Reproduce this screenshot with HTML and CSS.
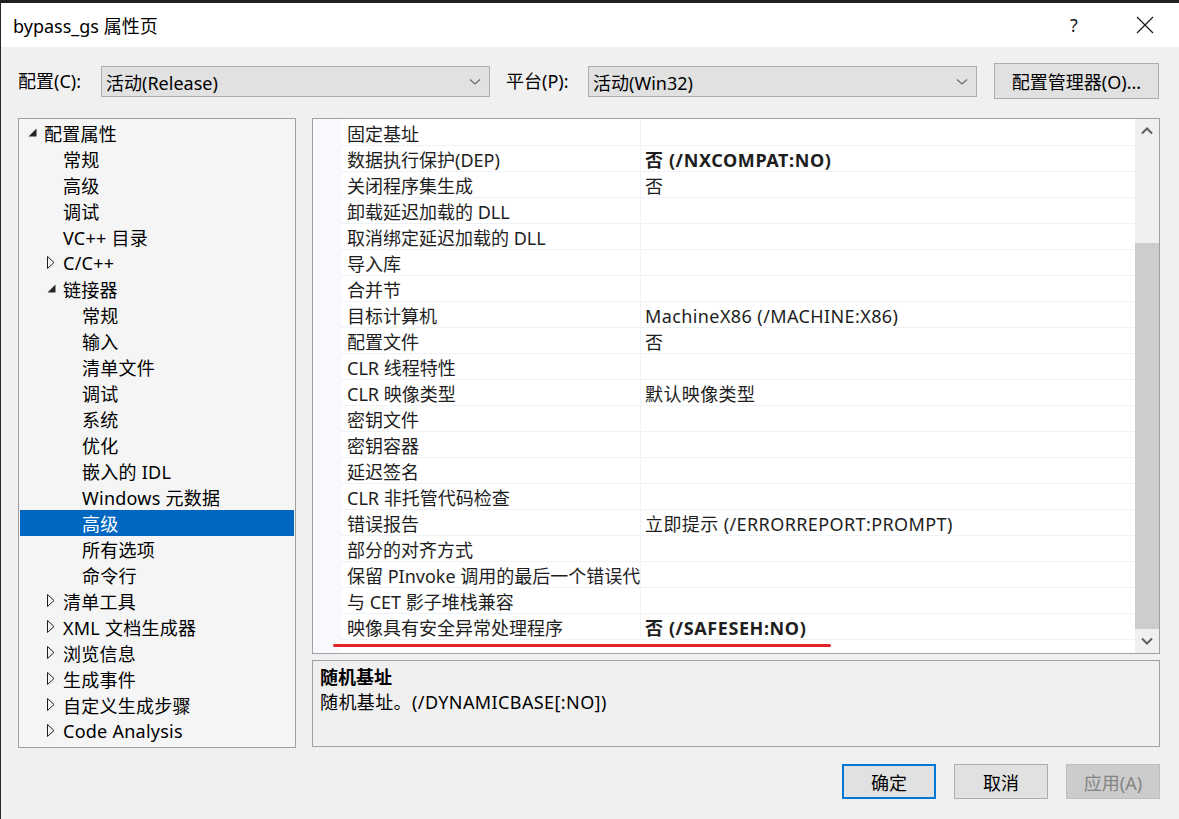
FILE: index.html
```html
<!DOCTYPE html>
<html lang="zh-CN">
<head>
<meta charset="utf-8">
<title>bypass_gs 属性页</title>
<link rel="stylesheet" href="styles.css">
</head>
<body>
<div class="window">
  <div class="titlebar">
    <div class="title">bypass_gs 属性页</div>
    <div class="tb-help">?</div>
    <div class="tb-close">
      <svg width="18" height="18" viewBox="0 0 18 18"><path d="M1 1 L17 17 M17 1 L1 17" stroke="#1a1a1a" stroke-width="1.2" fill="none"/></svg>
    </div>
  </div>
  <div class="body">
    <div class="toolbar">
      <div class="label lbl-config">配置(C):</div>
      <div class="combo"><span>活动(Release)</span><svg class="chev" width="12" height="8" viewBox="0 0 12 8"><path d="M1 1.5 L6 6 L11 1.5" stroke="#6a6a6a" stroke-width="1.2" fill="none"/></svg></div>
      <div class="label lbl-platform">平台(P):</div>
      <div class="combo"><span>活动(Win32)</span><svg class="chev" width="12" height="8" viewBox="0 0 12 8"><path d="M1 1.5 L6 6 L11 1.5" stroke="#6a6a6a" stroke-width="1.2" fill="none"/></svg></div>
      <div class="btn btn-manager">配置管理器(O)...</div>
    </div>
    <div class="main">
      <div class="tree">
        <div class="node l0"><span class="exp"><svg width="9" height="9" viewBox="0 0 9 9"><path d="M8.5 0.5 L8.5 8.5 L0.5 8.5 Z" fill="#262626"/></svg></span><span>配置属性</span></div>
        <div class="node l1"><span class="exp"></span><span>常规</span></div>
        <div class="node l1"><span class="exp"></span><span>高级</span></div>
        <div class="node l1"><span class="exp"></span><span>调试</span></div>
        <div class="node l1"><span class="exp"></span><span>VC++ 目录</span></div>
        <div class="node l1"><span class="exp"><svg width="8" height="13" viewBox="0 0 8 13"><path d="M0.5 0.5 L7 6.5 L0.5 12.5 Z" fill="none" stroke="#1e1e1e" stroke-width="1"/></svg></span><span>C/C++</span></div>
        <div class="node l1"><span class="exp"><svg width="9" height="9" viewBox="0 0 9 9"><path d="M8.5 0.5 L8.5 8.5 L0.5 8.5 Z" fill="#262626"/></svg></span><span>链接器</span></div>
        <div class="node l2"><span class="exp"></span><span>常规</span></div>
        <div class="node l2"><span class="exp"></span><span>输入</span></div>
        <div class="node l2"><span class="exp"></span><span>清单文件</span></div>
        <div class="node l2"><span class="exp"></span><span>调试</span></div>
        <div class="node l2"><span class="exp"></span><span>系统</span></div>
        <div class="node l2"><span class="exp"></span><span>优化</span></div>
        <div class="node l2"><span class="exp"></span><span>嵌入的 IDL</span></div>
        <div class="node l2"><span class="exp"></span><span>Windows 元数据</span></div>
        <div class="node l2 selected"><span class="exp"></span><span>高级</span></div>
        <div class="node l2"><span class="exp"></span><span>所有选项</span></div>
        <div class="node l2"><span class="exp"></span><span>命令行</span></div>
        <div class="node l1"><span class="exp"><svg width="8" height="13" viewBox="0 0 8 13"><path d="M0.5 0.5 L7 6.5 L0.5 12.5 Z" fill="none" stroke="#1e1e1e" stroke-width="1"/></svg></span><span>清单工具</span></div>
        <div class="node l1"><span class="exp"><svg width="8" height="13" viewBox="0 0 8 13"><path d="M0.5 0.5 L7 6.5 L0.5 12.5 Z" fill="none" stroke="#1e1e1e" stroke-width="1"/></svg></span><span>XML 文档生成器</span></div>
        <div class="node l1"><span class="exp"><svg width="8" height="13" viewBox="0 0 8 13"><path d="M0.5 0.5 L7 6.5 L0.5 12.5 Z" fill="none" stroke="#1e1e1e" stroke-width="1"/></svg></span><span>浏览信息</span></div>
        <div class="node l1"><span class="exp"><svg width="8" height="13" viewBox="0 0 8 13"><path d="M0.5 0.5 L7 6.5 L0.5 12.5 Z" fill="none" stroke="#1e1e1e" stroke-width="1"/></svg></span><span>生成事件</span></div>
        <div class="node l1"><span class="exp"><svg width="8" height="13" viewBox="0 0 8 13"><path d="M0.5 0.5 L7 6.5 L0.5 12.5 Z" fill="none" stroke="#1e1e1e" stroke-width="1"/></svg></span><span>自定义生成步骤</span></div>
        <div class="node l1"><span class="exp"><svg width="8" height="13" viewBox="0 0 8 13"><path d="M0.5 0.5 L7 6.5 L0.5 12.5 Z" fill="none" stroke="#1e1e1e" stroke-width="1"/></svg></span><span>Code Analysis</span></div>
      </div>
      <div class="right">
        <div class="grid">
          <div class="gutter"></div>
          <div class="rows">
            <div class="row"><div class="name">固定基址</div><div class="value"></div></div>
            <div class="row"><div class="name">数据执行保护(DEP)</div><div class="value bold">否 (/NXCOMPAT:NO)</div></div>
            <div class="row"><div class="name">关闭程序集生成</div><div class="value">否</div></div>
            <div class="row"><div class="name">卸载延迟加载的 DLL</div><div class="value"></div></div>
            <div class="row"><div class="name">取消绑定延迟加载的 DLL</div><div class="value"></div></div>
            <div class="row"><div class="name">导入库</div><div class="value"></div></div>
            <div class="row"><div class="name">合并节</div><div class="value"></div></div>
            <div class="row"><div class="name">目标计算机</div><div class="value">MachineX86 (/MACHINE:X86)</div></div>
            <div class="row"><div class="name">配置文件</div><div class="value">否</div></div>
            <div class="row"><div class="name">CLR 线程特性</div><div class="value"></div></div>
            <div class="row"><div class="name">CLR 映像类型</div><div class="value">默认映像类型</div></div>
            <div class="row"><div class="name">密钥文件</div><div class="value"></div></div>
            <div class="row"><div class="name">密钥容器</div><div class="value"></div></div>
            <div class="row"><div class="name">延迟签名</div><div class="value"></div></div>
            <div class="row"><div class="name">CLR 非托管代码检查</div><div class="value"></div></div>
            <div class="row"><div class="name">错误报告</div><div class="value">立即提示 (/ERRORREPORT:PROMPT)</div></div>
            <div class="row"><div class="name">部分的对齐方式</div><div class="value"></div></div>
            <div class="row"><div class="name">保留 PInvoke 调用的最后一个错误代码</div><div class="value"></div></div>
            <div class="row"><div class="name">与 CET 影子堆栈兼容</div><div class="value"></div></div>
            <div class="row"><div class="name">映像具有安全异常处理程序</div><div class="value bold">否 (/SAFESEH:NO)</div></div>
          </div>
          <div class="scrollbar">
            <div class="sb-btn"><svg width="12" height="8" viewBox="0 0 12 8"><path d="M1 6.5 L6 1.5 L11 6.5" stroke="#606060" stroke-width="2" fill="none"/></svg></div>
            <div class="sb-track"><div class="sb-thumb"></div></div>
            <div class="sb-btn"><svg width="12" height="8" viewBox="0 0 12 8"><path d="M1 1.5 L6 6.5 L11 1.5" stroke="#606060" stroke-width="2" fill="none"/></svg></div>
          </div>
          <div class="redline"></div>
        </div>
        <div class="desc">
          <div class="desc-title">随机基址</div>
          <div class="desc-text">随机基址。(/DYNAMICBASE[:NO])</div>
        </div>
      </div>
    </div>
    <div class="footer">
      <div class="btn btn-ok">确定</div>
      <div class="btn btn-cancel">取消</div>
      <div class="btn btn-apply">应用(A)</div>
    </div>
  </div>
</div>
</body>
</html>
```

FILE: styles.css
```css
* { box-sizing: border-box; }
html, body { margin: 0; padding: 0; }
body {
  width: 1179px;
  height: 819px;
  overflow: hidden;
  background: #f0f0f0;
  font-family: "Noto Sans", "Noto Sans CJK SC", sans-serif;
  font-size: 18px;
  color: #000;
}
.window {
  width: 1179px;
  height: 819px;
  border-top: 3px solid #1f1f1f;
  border-left: 1px solid #2a2a2a;
  background: #f0f0f0;
  display: flex;
  flex-direction: column;
}
.titlebar {
  height: 44px;
  background: #fff;
  display: flex;
  align-items: center;
  padding-left: 12px;
}
.title { flex: 1; font-size: 18px; color: #000; }
.tb-help {
  width: 30px;
  text-align: center;
  font-size: 18px;
  color: #1a1a1a;
  margin-right: 41px;
}
.tb-close {
  width: 30px;
  display: flex;
  justify-content: center;
  margin-right: 19px;
}
.body {
  flex: 1;
  padding: 16px 19px 0 17px;
  display: flex;
  flex-direction: column;
}
.toolbar {
  display: flex;
  align-items: center;
  height: 36px;
}
.label { line-height: 31px; padding-top: 1px; }
.lbl-config { width: 83px; }
.lbl-platform { width: 82px; margin-left: 16px; }
.combo {
  width: 389px;
  height: 31px;
  background: #e1e1e1;
  border: 1px solid #adadad;
  display: flex;
  align-items: center;
  padding-left: 4px;
  padding-right: 8px;
}
.combo span { flex: 1; padding-top: 1px; }
.chev { margin-top: 1px; }
.btn {
  background: #e1e1e1;
  border: 1px solid #adadad;
  display: flex;
  align-items: center;
  justify-content: center;
}
.btn-manager {
  width: 165px;
  height: 36px;
  margin-left: 17px;
}
.main {
  margin-top: 19px;
  height: 630px;
  display: flex;
}
.tree {
  width: 278px;
  height: 630px;
  background: #f5f5f5;
  border: 1px solid #a0a0a0;
  padding-top: 1px;
}
.node {
  height: 26px;
  display: flex;
  align-items: center;
  white-space: nowrap;
  margin: 0 1px 0 0;
  letter-spacing: 0.25px;
}
.node.l0 { padding-left: 5px; }
.node.l1 { padding-left: 24px; }
.node.l2 { padding-left: 43px; }
.exp {
  width: 16px;
  margin-right: 4px;
  display: flex;
  justify-content: center;
  align-items: center;
}
.node.l0 .exp svg, .node.l1 .exp svg { margin-top: -2px; }
.node.selected { background: #0067c0; color: #fff; margin-left: 1px; padding-left: 42px; }
.right {
  margin-left: 16px;
  width: 848px;
  display: flex;
  flex-direction: column;
}
.grid {
  position: relative;
  height: 536px;
  border: 1px solid #a0a0a0;
  background: #fff;
  display: flex;
}
.gutter {
  width: 28px;
  background: #f7f9fc;
}
.rows {
  flex: 1;
  padding-top: 1px;
  overflow: hidden;
}
.row {
  display: flex;
  height: 26px;
  border-bottom: 1px solid #eff2f7;
  color: #1e1e1e;
}
.name {
  width: 300px;
  padding-left: 6px;
  padding-top: 3px;
  border-right: 1px solid #eff2f7;
  white-space: nowrap;
  overflow: hidden;
  line-height: 22px;
}
.value {
  flex: 1;
  padding-left: 4px;
  padding-top: 3px;
  white-space: nowrap;
  line-height: 22px;
  letter-spacing: 0.4px;
}
.bold { font-weight: bold; letter-spacing: 0.6px; }
.scrollbar {
  width: 24px;
  background: #f0f0f0;
  display: flex;
  flex-direction: column;
}
.sb-btn {
  height: 24px;
  display: flex;
  align-items: center;
  justify-content: center;
}
.sb-track {
  flex: 1;
  display: flex;
  flex-direction: column;
  justify-content: flex-end;
}
.sb-thumb {
  height: 386px;
  background: #cdcdcd;
}
.redline {
  position: absolute;
  left: 20px;
  top: 525px;
  width: 498px;
  height: 3px;
  border-radius: 2px;
  background: #e8222a;
}
.desc {
  margin-top: 6px;
  height: 87px;
  border: 1px solid #a0a0a0;
  background: #f0f0f0;
  padding: 4px 0 0 7px;
  line-height: 25px;
}
.desc-title { font-weight: bold; }
.desc-text { letter-spacing: 0.4px; }
.footer {
  margin-top: 16px;
  display: flex;
  justify-content: flex-end;
  gap: 18px;
}
.footer .btn {
  width: 94px;
  height: 35px;
}
.btn-ok { border: 2px solid #0078d7; }
.btn-apply {
  background: #cccccc;
  border-color: #bfbfbf;
  color: #838383;
}
```
